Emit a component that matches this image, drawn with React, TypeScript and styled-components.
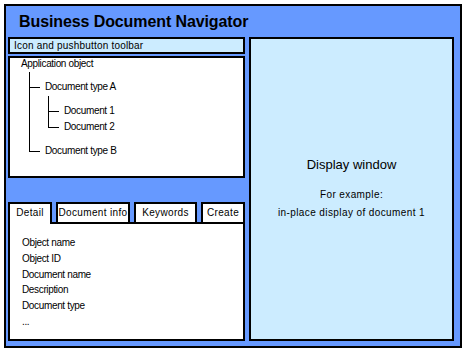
import styled, {createGlobalStyle} from "styled-components";

const Global = createGlobalStyle`
  body {
    margin: 0;
    background: #fff;
    font-family: "Liberation Sans", Arial, sans-serif;
  }
`;

const BLUE = "#6699ff";
const PALE = "#ccecff";

const Frame = styled.div`
  margin: 4px;
  width: 458px;
  height: 344px;
  box-sizing: border-box;
  border: 2px solid #000;
  background: ${BLUE};
  padding: 0 6px 5px 2px;
  display: flex;
  flex-direction: column;
`;

const Title = styled.div`
  height: 31px;
  display: flex;
  align-items: center;
  padding-left: 11px;
  font-size: 16px;
  font-weight: bold;
  letter-spacing: -0.1px;
  color: #000;
`;

const Main = styled.div`
  flex: 1;
  display: flex;
  gap: 4px;
`;

const LeftColumn = styled.div`
  width: 237px;
  display: flex;
  flex-direction: column;
`;

const Box = styled.div`
  box-sizing: border-box;
  border: 2px solid #000;
  background: #fff;
`;

const Toolbar = styled(Box)`
  height: 17px;
  background: ${PALE};
  font-size: 10px;
  letter-spacing: 0.2px;
  line-height: 13px;
  padding-left: 4px;
`;

const TreeBox = styled(Box)`
  margin-top: 2px;
  height: 122px;
  padding: 0 0 0 11px;
  font-size: 10px;
  letter-spacing: -0.35px;
`;

const Label = styled.div`
  height: 12px;
  line-height: 12px;
  white-space: nowrap;
`;

const Branch = styled.ul<{$top: number; $bottom: number; $indent: number}>`
  list-style: none;
  position: relative;
  margin: ${p => p.$top}px 0 ${p => p.$bottom}px ${p => p.$indent}px;
  padding: 9px 0 0 0;
  display: flex;
  flex-direction: column;
  gap: 4px;

  &::before {
    content: "";
    position: absolute;
    left: 0;
    top: 0;
    bottom: 6px;
    width: 1px;
    background: #000;
  }
`;

const Leaf = styled.li`
  position: relative;
  padding-left: 16px;

  &::before {
    content: "";
    position: absolute;
    left: 0;
    top: 6px;
    width: 11px;
    height: 1px;
    background: #000;
  }
`;

const Tabs = styled.div`
  margin-top: 24px;
  display: flex;
  gap: 4px;
  height: 20px;
  position: relative;
  z-index: 1;
`;

const Tab = styled.div<{$width: number; $active?: boolean}>`
  flex-shrink: 0;
  width: ${p => p.$width}px;
  box-sizing: border-box;
  height: ${p => (p.$active ? 22 : 20)}px;
  border: 2px solid #000;
  border-bottom: none;
  background: #fff;
  font-size: 10px;
  letter-spacing: 0.35px;
  white-space: nowrap;
  display: flex;
  justify-content: center;
  padding-top: 3px;
`;

const DetailPanel = styled(Box)`
  flex: 1;
  padding: 11px 0 0 12px;
  font-size: 10px;
  letter-spacing: -0.35px;
`;

const Field = styled.div`
  height: 15.75px;
  line-height: 15.75px;
`;

const Display = styled(Box)`
  width: 205px;
  background: ${PALE};
  display: flex;
  flex-direction: column;
  align-items: center;
  padding-top: 118px;
`;

const DisplayTitle = styled.div`
  font-size: 13px;
  margin-bottom: 14px;
`;

const DisplayNote = styled.div`
  font-size: 10px;
  letter-spacing: 0.4px;
  line-height: 18px;
`;

export default function App() {
    const fields = ["Object name", "Object ID", "Document name", "Description", "Document type", "..."];

    return (
        <>
            <Global/>
            <Frame>
                <Title>Business Document Navigator</Title>
                <Main>
                    <LeftColumn>
                        <Toolbar>Icon and pushbutton toolbar</Toolbar>
                        <TreeBox>
                            <Label>Application object</Label>
                            <Branch $top={2} $bottom={0} $indent={8}>
                                <Leaf>
                                    <Label>Document type A</Label>
                                    <Branch $top={3} $bottom={8} $indent={3}>
                                        <Leaf><Label>Document 1</Label></Leaf>
                                        <Leaf><Label>Document 2</Label></Leaf>
                                    </Branch>
                                </Leaf>
                                <Leaf><Label>Document type B</Label></Leaf>
                            </Branch>
                        </TreeBox>
                        <Tabs>
                            <Tab $width={44} $active>Detail</Tab>
                            <Tab $width={74}>Document info</Tab>
                            <Tab $width={63}>Keywords</Tab>
                            <Tab $width={44}>Create</Tab>
                        </Tabs>
                        <DetailPanel>
                            {fields.map(f => <Field key={f}>{f}</Field>)}
                        </DetailPanel>
                    </LeftColumn>
                    <Display>
                        <DisplayTitle>Display window</DisplayTitle>
                        <DisplayNote>For example:</DisplayNote>
                        <DisplayNote>in-place display of document 1</DisplayNote>
                    </Display>
                </Main>
            </Frame>
        </>
    );
}
